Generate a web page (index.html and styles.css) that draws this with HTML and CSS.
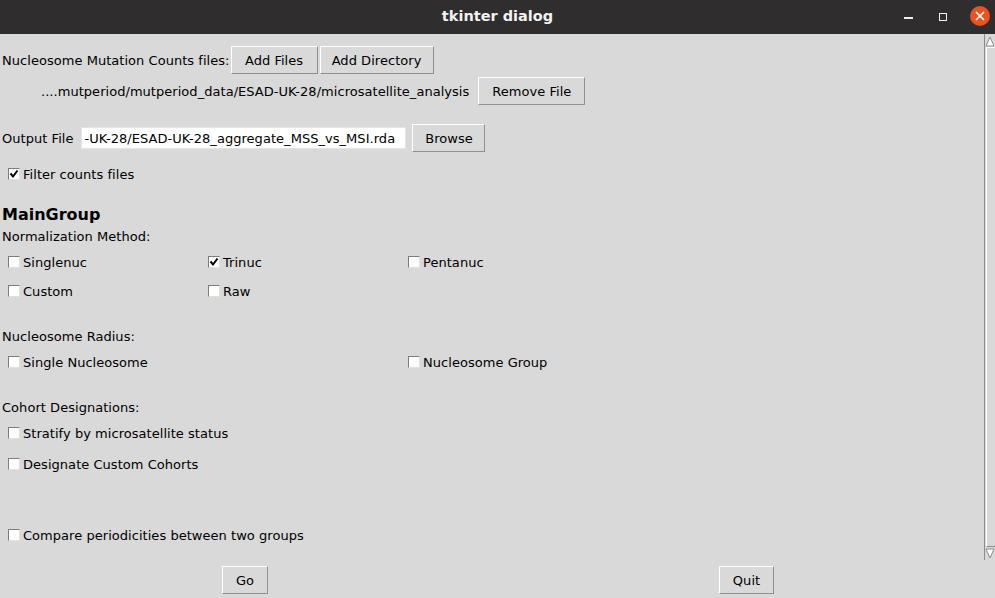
FILE: index.html
```html
<!DOCTYPE html>
<html>
<head>
<meta charset="utf-8">
<link rel="stylesheet" href="styles.css">
</head>
<body>
<div class="window">
  <div class="titlebar">
    <div class="title">tkinter dialog</div>
    <div class="controls">
      <span class="ctl-min"></span>
      <span class="ctl-max"></span>
      <span class="ctl-close">
        <svg width="10" height="10" viewBox="0 0 10 10"><path d="M1 1 L9 9 M9 1 L1 9" stroke="#fff" stroke-width="1.6" fill="none"/></svg>
      </span>
    </div>
  </div>
  <div class="main">
    <div class="content">
      <div class="row r1">
        <span class="label">Nucleosome Mutation Counts files:</span>
        <span class="btn b-addfiles">Add Files</span>
        <span class="btn b-adddir">Add Directory</span>
      </div>
      <div class="row r2">
        <span class="label path">....mutperiod/mutperiod_data/ESAD-UK-28/microsatellite_analysis</span>
        <span class="btn b-remove">Remove File</span>
      </div>
      <div class="row r3">
        <span class="label">Output File</span>
        <span class="entry">-UK-28/ESAD-UK-28_aggregate_MSS_vs_MSI.rda</span>
        <span class="btn b-browse">Browse</span>
      </div>
      <div class="crow r-filter">
        <span class="cb checked"><svg width="10" height="10" viewBox="0 0 10 10"><path d="M1.5 4.5 L4 7.5 L8.5 1.5" stroke="#000" stroke-width="2" fill="none"/></svg></span>
        <span class="cl">Filter counts files</span>
      </div>
      <div class="heading">MainGroup</div>
      <div class="section s-norm">Normalization Method:</div>
      <div class="grid3 g1">
        <div class="crow2"><span class="cb"></span><span class="cl">Singlenuc</span></div>
        <div class="crow2"><span class="cb checked"><svg width="10" height="10" viewBox="0 0 10 10"><path d="M1.5 4.5 L4 7.5 L8.5 1.5" stroke="#000" stroke-width="2" fill="none"/></svg></span><span class="cl">Trinuc</span></div>
        <div class="crow2"><span class="cb"></span><span class="cl">Pentanuc</span></div>
      </div>
      <div class="grid3 g2">
        <div class="crow2"><span class="cb"></span><span class="cl">Custom</span></div>
        <div class="crow2"><span class="cb"></span><span class="cl">Raw</span></div>
        <div></div>
      </div>
      <div class="section s-rad">Nucleosome Radius:</div>
      <div class="grid3 g3">
        <div class="crow2 span2"><span class="cb"></span><span class="cl">Single Nucleosome</span></div>
        <div class="crow2"><span class="cb"></span><span class="cl">Nucleosome Group</span></div>
      </div>
      <div class="section s-coh">Cohort Designations:</div>
      <div class="crow r-strat"><span class="cb"></span><span class="cl">Stratify by microsatellite status</span></div>
      <div class="crow r-desig"><span class="cb"></span><span class="cl">Designate Custom Cohorts</span></div>
      <div class="crow r-comp"><span class="cb"></span><span class="cl">Compare periodicities between two groups</span></div>
    </div>
    <div class="scrollbar">
      <div class="arrow up"><svg width="10" height="12" viewBox="0 0 10 12"><path d="M1 11 L5 2 L9 11 Z" fill="#fff" stroke="#8c8c8c" stroke-width="1"/></svg></div>
      <div class="thumb"></div>
      <div class="arrow down"><svg width="10" height="12" viewBox="0 0 10 12"><path d="M1 1 L5 10 L9 1 Z" fill="#fff" stroke="#8c8c8c" stroke-width="1"/></svg></div>
    </div>
  </div>
  <div class="footer">
    <span class="btn b-go">Go</span>
    <span class="btn b-quit">Quit</span>
  </div>
</div>
</body>
</html>
```
FILE: styles.css
```css
html, body {
  margin: 0;
  padding: 0;
}
body {
  width: 995px;
  height: 598px;
  overflow: hidden;
  background: #d9d9d9;
  font-family: "DejaVu Sans", sans-serif;
  font-size: 13px;
  letter-spacing: 0.04px;
  color: #000;
}
.window {
  display: flex;
  flex-direction: column;
  height: 598px;
}
.titlebar {
  height: 34px;
  background: #2f2d2d;
  position: relative;
  display: flex;
  align-items: center;
  justify-content: center;
  flex: none;
}
.title {
  color: #f2f2f2;
  font-family: "DejaVu Sans", sans-serif;
  font-weight: bold;
  font-size: 14.5px;
  letter-spacing: 0;
  margin-top: -2px;
}
.controls {
  position: absolute;
  right: 0;
  top: 0;
  height: 34px;
  display: flex;
  align-items: center;
}
.ctl-min {
  width: 9px;
  height: 2px;
  background: #f0f0f0;
  margin-right: 26px;
  margin-top: 2px;
}
.ctl-max {
  width: 6px;
  height: 6px;
  border: 1px solid #f0f0f0;
  margin-right: 23px;
  margin-top: -1px;
}
.ctl-close {
  width: 20px;
  height: 20px;
  border-radius: 50%;
  background: #e9531f;
  display: flex;
  align-items: center;
  justify-content: center;
  margin-right: 5px;
  margin-top: -2px;
}
.main {
  flex: 1;
  display: flex;
  min-height: 0;
}
.content {
  flex: 1;
  padding-top: 12px;
}
.row {
  display: flex;
  align-items: center;
  height: 28px;
}
.label {
  margin-left: 2px;
}
.path {
  margin-left: 41px;
  margin-right: 9px;
}
.r2 { margin-top: 3px; }
.r3 { margin-top: 19px; }
.r1 .label { margin-right: 1px; }
.btn {
  display: inline-flex;
  align-items: center;
  justify-content: center;
  box-sizing: border-box;
  height: 28px;
  border-top: 1px solid #ffffff;
  border-left: 1px solid #ffffff;
  border-right: 1px solid #8f8f8f;
  border-bottom: 1px solid #8f8f8f;
  background: #d9d9d9;
}
.b-addfiles { width: 87px; }
.b-adddir { width: 114px; margin-left: 2px; }
.b-remove { width: 107px; }
.b-browse { width: 73px; margin-left: 6px; }
.entry {
  box-sizing: border-box;
  height: 22px;
  width: 325px;
  background: #fff;
  margin-left: 8px;
  padding-left: 2px;
  display: flex;
  align-items: center;
  overflow: hidden;
  white-space: nowrap;
  border: 1px solid #e5e5e5;
}
.crow, .crow2 {
  display: flex;
  align-items: center;
  height: 20px;
}
.crow { margin-left: 8px; }
.crow2 { margin-left: 8px; }
.cb {
  box-sizing: border-box;
  width: 12px;
  height: 12px;
  background: #fff;
  border-top: 1px solid #7c7c7c;
  border-left: 1px solid #7c7c7c;
  border-right: 1px solid #e0e0e0;
  border-bottom: 1px solid #e0e0e0;
  display: flex;
  align-items: center;
  justify-content: center;
  margin-right: 3px;
}
.r-filter { margin-top: 12px; }
.heading {
  font-weight: bold;
  font-size: 16px;
  letter-spacing: 0;
  height: 20px;
  line-height: 20px;
  margin-left: 2px;
  margin-top: 21px;
}
.section {
  height: 18px;
  line-height: 18px;
  margin-left: 2px;
}
.s-norm { margin-top: 3px; }
.grid3 {
  display: grid;
  grid-template-columns: 200px 200px 200px;
}
.span2 { grid-column: span 2; }
.g1 { margin-top: 6px; }
.g2 { margin-top: 9px; }
.s-rad { margin-top: 27px; }
.g3 { margin-top: 6px; }
.s-coh { margin-top: 27px; }
.r-strat { margin-top: 6px; }
.r-desig { margin-top: 11px; }
.r-comp { margin-top: 51px; }
.scrollbar {
  width: 11px;
  flex: none;
  display: flex;
  flex-direction: column;
  border-left: 1px solid #8c8c8c;
  box-sizing: border-box;
}
.arrow {
  height: 13px;
  display: flex;
  align-items: center;
  justify-content: center;
  flex: none;
}
.thumb {
  flex: 1;
  border-left: 1px solid #fff;
  border-top: 1px solid #fff;
  border-bottom: 1px solid #8c8c8c;
  margin-left: 1px;
}
.footer {
  height: 38px;
  flex: none;
  display: flex;
  align-items: center;
}
.b-go { width: 46px; margin-left: 222px; margin-top: 2px; }
.b-quit { width: 55px; margin-left: 451px; margin-top: 2px; }
```
